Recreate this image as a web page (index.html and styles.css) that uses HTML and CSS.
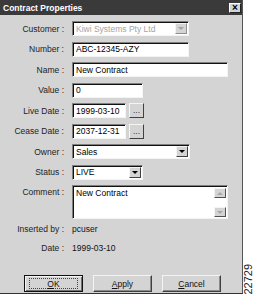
FILE: index.html
```html
<!DOCTYPE html>
<html>
<head>
<meta charset="utf-8">
<link rel="stylesheet" href="styles.css">
</head>
<body>
<div class="page">
  <div class="dialog">
    <div class="titlebar">
      <span>Contract Properties</span>
      <span class="close">×</span>
    </div>
    <div class="form">
      <span class="lbl">Customer :</span>
      <div class="field combo mid disabled"><span class="val">Kiwi Systems Pty Ltd</span><span class="drop off"><i></i></span></div>

      <span class="lbl">Number :</span>
      <div class="field mid"><span class="val">ABC-12345-AZY</span></div>

      <span class="lbl">Name :</span>
      <div class="field wide"><span class="val">New Contract</span></div>

      <span class="lbl">Value :</span>
      <div class="field short"><span class="val">0</span></div>

      <span class="lbl">Live Date :</span>
      <div class="datewrap"><div class="field date"><span class="val">1999-03-10</span></div><span class="dots">...</span></div>

      <span class="lbl">Cease Date :</span>
      <div class="datewrap"><div class="field date"><span class="val">2037-12-31</span></div><span class="dots">...</span></div>

      <span class="lbl">Owner :</span>
      <div class="field combo owner"><span class="val">Sales</span><span class="drop"><i></i></span></div>

      <span class="lbl">Status :</span>
      <div class="field combo short"><span class="val">LIVE</span><span class="drop"><i></i></span></div>

      <span class="lbl top">Comment :</span>
      <div class="field memo wide"><span class="val">New Contract</span>
        <span class="scroll"><span class="sb up"><i></i></span><span class="sb down"><i></i></span></span>
      </div>
    </div>
    <div class="info">
      <span class="lbl">Inserted by :</span><span class="val">pcuser</span>
      <span class="lbl">Date :</span><span class="val">1999-03-10</span>
    </div>
    <div class="buttons">
      <span class="btn default"><span class="focus"><u>O</u>K</span></span>
      <span class="btn"><span><u>A</u>pply</span></span>
      <span class="btn"><span><u>C</u>ancel</span></span>
    </div>
  </div>
  <div class="fig">22729</div>
</div>
</body>
</html>
```
FILE: styles.css
```css
* { box-sizing: border-box; }
body {
  margin: 0;
  background: #fff;
  font-family: "Liberation Sans", Arial, sans-serif;
  font-size: 8.5px;
  color: #111;
}
.page {
  display: flex;
  width: 253px;
  height: 304px;
}
.dialog {
  width: 243px;
  height: 294px;
  flex: none;
  background: #d4d4d4;
  border-right: 1px solid #555;
  border-bottom: 1px solid #333;
  display: flex;
  flex-direction: column;
}
.titlebar {
  height: 15px;
  background: #3a3a3a;
  color: #fff;
  font-weight: bold;
  display: flex;
  align-items: center;
  justify-content: space-between;
  padding: 0 1px 0 3px;
}
.close {
  width: 12px;
  height: 10px;
  background: #d4d4d4;
  color: #000;
  border: 1px solid;
  border-color: #fff #222 #222 #fff;
  display: flex;
  align-items: center;
  justify-content: center;
  font-size: 10px;
  line-height: 1;
}
.form {
  display: grid;
  grid-template-columns: 64px auto;
  column-gap: 8px;
  row-gap: 5.5px;
  padding-top: 6px;
  align-items: center;
  justify-items: start;
}
.lbl {
  justify-self: end;
  white-space: nowrap;
  color: #222;
}
.lbl.top { align-self: start; padding-top: 2px; }
.field {
  height: 15px;
  background: #fff;
  border: 1px solid;
  border-color: #808080 #f4f4f4 #f4f4f4 #808080;
  box-shadow: inset 1px 1px 0 #111;
  display: flex;
  align-items: center;
  padding-left: 3px;
  white-space: nowrap;
  color: #000;
}
.mid { width: 117px; }
.wide { width: 156px; }
.short { width: 71px; }
.owner { width: 118px; }
.date { width: 54px; }
.disabled .val { color: #a4a4a4; }
.drop {
  margin-left: auto;
  margin-right: 1px;
  width: 12px;
  height: 11px;
  background: #d4d4d4;
  border: 1px solid;
  border-color: #f4f4f4 #404040 #404040 #f4f4f4;
  display: flex;
  align-items: center;
  justify-content: center;
}
.drop i, .sb.down i {
  display: block;
  width: 0;
  height: 0;
  border-left: 3px solid transparent;
  border-right: 3px solid transparent;
  border-top: 3px solid #000;
}
.drop.off { border-color: #f4f4f4 #909090 #909090 #f4f4f4; }
.drop.off i { border-top-color: #a0a0a0; }
.datewrap {
  display: flex;
  align-items: center;
  gap: 3px;
}
.dots {
  width: 15px;
  height: 15px;
  background: #d4d4d4;
  border: 1px solid;
  border-color: #f4f4f4 #404040 #404040 #f4f4f4;
  display: flex;
  align-items: flex-end;
  justify-content: center;
  line-height: 9px;
  padding-bottom: 2px;
  color: #333;
}
.memo {
  height: 34px;
  align-items: stretch;
  padding-top: 2px;
  padding-right: 1px;
  padding-bottom: 1px;
}
.memo .val { flex: 1; line-height: 10px; }
.scroll {
  width: 12px;
  display: flex;
  flex-direction: column;
  justify-content: space-between;
}
.sb {
  height: 10px;
  background: #d4d4d4;
  border: 1px solid;
  border-color: #f4f4f4 #505050 #505050 #f4f4f4;
  display: flex;
  align-items: center;
  justify-content: center;
}
.sb i { display: block; width: 0; height: 0; }
.sb.up i {
  border-left: 3px solid transparent;
  border-right: 3px solid transparent;
  border-bottom: 3px solid #a8a8a8;
}
.sb.down i { border-top-color: #a8a8a8; }
.info {
  display: grid;
  grid-template-columns: 64px auto;
  column-gap: 8px;
  row-gap: 9px;
  padding-top: 5px;
  line-height: 10px;
  justify-items: start;
}
.info .val { color: #111; }
.buttons {
  margin-top: auto;
  margin-bottom: 1px;
  display: flex;
  gap: 10px;
  padding-left: 24px;
}
.btn {
  width: 59px;
  height: 17px;
  background: #d4d4d4;
  border: 1px solid;
  border-color: #f4f4f4 #404040 #404040 #f4f4f4;
  box-shadow: inset -1px -1px 0 #8a8a8a;
  display: flex;
  align-items: center;
  justify-content: center;
  color: #111;
}
.btn.default {
  border-color: #111;
  box-shadow: inset 1px 1px 0 #f4f4f4, inset -1px -1px 0 #707070;
}
.focus {
  width: 49px;
  height: 11px;
  border: 1px dotted #444;
  display: flex;
  align-items: center;
  justify-content: center;
}
.fig {
  writing-mode: vertical-rl;
  transform: rotate(180deg);
  align-self: flex-end;
  margin: 0 0 9px 1px;
  font-size: 11px;
  line-height: 9px;
  color: #222;
}
```
